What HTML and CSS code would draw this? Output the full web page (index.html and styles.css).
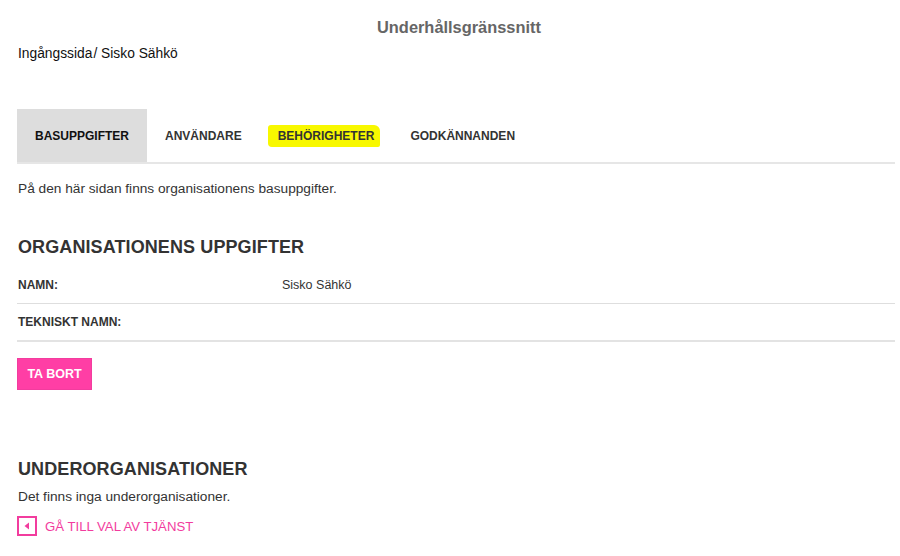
FILE: index.html
```html
<!DOCTYPE html>
<html lang="sv">
<head>
    <meta charset="UTF-8">
    <meta name="viewport" content="width=device-width, initial-scale=1.0">
    <title>Underhållsgränssnitt</title>
    <link rel="stylesheet" href="styles.css">
</head>
<body>
    <div class="page-title">Underhållsgränssnitt</div>
    <div class="breadcrumb">Ingångssida<span class="sep">/</span> Sisko Sähkö</div>

    <div class="tabs">
        <div class="tab active">BASUPPGIFTER</div>
        <div class="tab">ANVÄNDARE</div>
        <div class="tab"><span class="marker">BEHÖRIGHETER</span></div>
        <div class="tab">GODKÄNNANDEN</div>
    </div>

    <p class="intro">På den här sidan finns organisationens basuppgifter.</p>

    <h2 class="section-title">ORGANISATIONENS UPPGIFTER</h2>
    <div class="info-table">
        <div class="info-row">
            <div class="info-label">NAMN:</div>
            <div class="info-value">Sisko Sähkö</div>
        </div>
        <div class="info-row last">
            <div class="info-label">TEKNISKT NAMN:</div>
            <div class="info-value"></div>
        </div>
    </div>
    <button class="delete-button">TA BORT</button>

    <h2 class="section-title sub">UNDERORGANISATIONER</h2>
    <p class="empty-text">Det finns inga underorganisationer.</p>
    <a class="back-link" href="#">
        <span class="back-icon">
            <svg width="8" height="8" viewBox="0 0 8 8"><path d="M6 0.5 L1.5 4 L6 7.5 Z" fill="#f23c9e"/></svg>
        </span>
        GÅ TILL VAL AV TJÄNST
    </a>
</body>
</html>
```

FILE: styles.css
```css
body {
    font-family: "Liberation Sans", Arial, sans-serif;
    margin: 0;
    padding: 0 5px 0 17px;
    background-color: #fff;
    color: #333;
}
.page-title {
    text-align: center;
    font-size: 16.4px;
    font-weight: bold;
    color: #666;
    padding-top: 18px;
    padding-left: 6px;
}
.breadcrumb {
    font-size: 13.8px;
    color: #111;
    margin-top: 9px;
    padding-left: 1px;
}
.breadcrumb .sep {
    margin-left: 1px;
}
.tabs {
    display: flex;
    margin-top: 48px;
    border-bottom: 2px solid #e6e6e6;
}
.tab {
    font-size: 12px;
    font-weight: bold;
    color: #333;
    padding: 0 18px;
    height: 53px;
    display: flex;
    align-items: center;
}
.tab.active {
    background-color: #dddddd;
    color: #111;
}
.marker {
    background-color: #f8f800;
    padding: 4px 6px 4px 10px;
    margin: 0 -6px 0 -10px;
    border-radius: 3px 6px 2px 4px;
}
.intro {
    font-size: 13.7px;
    margin: 17px 0 0 1px;
}
.section-title {
    font-size: 18px;
    font-weight: bold;
    color: #333;
    margin: 41px 0 0 1px;
    letter-spacing: 0.1px;
}
.info-table {
    margin-top: 8px;
}
.info-row {
    display: flex;
    align-items: center;
    height: 37px;
    border-bottom: 1px solid #dedede;
}
.info-row.last {
    height: 36px;
    border-bottom: 2px solid #e3e3e3;
}
.info-label {
    width: 264px;
    padding-left: 1px;
    font-size: 12px;
    font-weight: bold;
    color: #333;
}
.info-value {
    font-size: 12.5px;
    color: #333;
}
.delete-button {
    margin-top: 16px;
    width: 75px;
    height: 32px;
    background-color: #ff3ea5;
    border: 1px solid #f23c9e;
    color: #fff;
    font-family: inherit;
    font-size: 12.5px;
    font-weight: bold;
    cursor: pointer;
    padding: 0;
}
.section-title.sub {
    margin-top: 69px;
}
.empty-text {
    font-size: 13.7px;
    margin: 9px 0 0 1px;
}
.back-link {
    display: flex;
    align-items: center;
    margin-top: 12px;
    color: #f23c9e;
    font-size: 13.2px;
    text-decoration: none;
}
.back-icon {
    width: 16px;
    height: 16px;
    border: 2px solid #f23c9e;
    display: flex;
    align-items: center;
    justify-content: center;
    margin-right: 8px;
}
```
